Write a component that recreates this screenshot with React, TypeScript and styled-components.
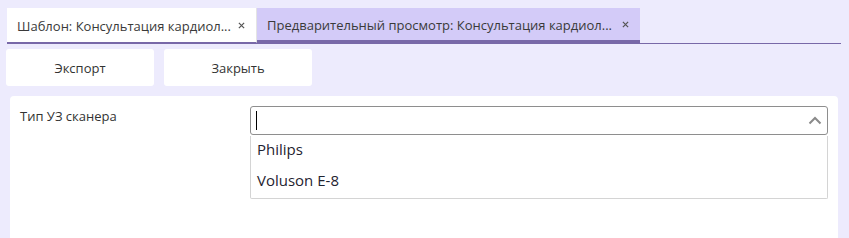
import { useState } from "react";
import styled, { createGlobalStyle } from "styled-components";

const tabs = [
  { id: "template", title: "Шаблон: Консультация кардиол...", width: 250 },
  { id: "preview", title: "Предварительный просмотр: Консультация кардиол...", width: 383 },
];

const scanners = ["Philips", "Voluson E-8"];

const App = () => {
  const [active, setActive] = useState("preview");
  const [query, setQuery] = useState("");

  return (
    <>
      <GlobalStyle />
      <TabBar>
        {tabs.map((tab) => (
          <Tab
            key={tab.id}
            $active={tab.id === active}
            $width={tab.width}
            onClick={() => setActive(tab.id)}
          >
            <TabTitle>{tab.title}</TabTitle>
            <CloseIcon viewBox="0 0 8 8">
              <path d="M1 1 L7 7 M7 1 L1 7" />
            </CloseIcon>
          </Tab>
        ))}
      </TabBar>
      <Toolbar>
        <ToolButton>Экспорт</ToolButton>
        <ToolButton>Закрыть</ToolButton>
      </Toolbar>
      <Panel>
        <FieldLabel>Тип УЗ сканера</FieldLabel>
        <Combo>
          <ComboInput>
            <Input value={query} onChange={(e) => setQuery(e.target.value)} />
            <Caret />
            <Chevron viewBox="0 0 14 9">
              <path d="M1.5 7.5 L7 2 L12.5 7.5" />
            </Chevron>
          </ComboInput>
          <List>
            {scanners.map((s) => (
              <Option key={s}>{s}</Option>
            ))}
          </List>
        </Combo>
      </Panel>
    </>
  );
};
export default App;

const GlobalStyle = createGlobalStyle`
  html, body {
    margin: 0;
    background: #edebfd;
    font-family: "Open Sans", "Noto Sans", sans-serif;
    color: #333333;
  }
  * { box-sizing: border-box; }
`;

const TabBar = styled.div`
  display: flex;
  margin: 0 8px 0 7px;
  padding-top: 8px;
  border-bottom: 1px solid #7868a8;
  height: 44px;
`;

const Tab = styled.div<{ $active: boolean; $width: number }>`
  display: flex;
  align-items: center;
  justify-content: space-between;
  width: ${(p) => p.$width}px;
  height: 35px;
  padding: 0 11px 0 10px;
  background: ${(p) => (p.$active ? "#d3cbf8" : "#ffffff")};
  border-bottom: ${(p) => (p.$active ? "3px solid #7868a8" : "1px solid #7868a8")};
  margin-bottom: -1px;
  border-right: ${(p) => (p.$active ? "none" : "1px solid #e4e4e4")};
  cursor: pointer;
`;

const TabTitle = styled.span`
  font-size: 13px;
  color: #3a3a3a;
  white-space: nowrap;
  padding-top: 1px;
`;

const CloseIcon = styled.svg`
  width: 7px;
  height: 7px;
  stroke: #555555;
  stroke-width: 1.4;
  fill: none;
  flex-shrink: 0;
`;

const Toolbar = styled.div`
  display: flex;
  gap: 10px;
  padding: 5px 0 0 6px;
`;

const ToolButton = styled.button`
  width: 148px;
  height: 37px;
  background: #ffffff;
  border: none;
  border-radius: 3px;
  font-family: inherit;
  font-size: 13px;
  color: #333333;
  cursor: pointer;
`;

const Panel = styled.div`
  display: grid;
  grid-template-columns: 230px 1fr;
  align-items: start;
  margin: 10px 11px 0 10px;
  padding: 10px 10px 0 10px;
  height: 150px;
  background: #ffffff;
  border-radius: 4px;
`;

const FieldLabel = styled.div`
  font-size: 13px;
  color: #333333;
  padding-top: 1px;
`;

const Combo = styled.div`
  display: flex;
  flex-direction: column;
`;

const ComboInput = styled.div`
  position: relative;
  height: 29px;
  border: 1px solid #8e8e8e;
  border-radius: 3px;
`;

const Input = styled.input`
  width: 100%;
  height: 100%;
  border: none;
  outline: none;
  background: transparent;
  padding: 0 30px 0 6px;
  font-family: inherit;
  font-size: 14px;
  caret-color: transparent;
`;

const Caret = styled.span`
  position: absolute;
  left: 5px;
  top: 4px;
  width: 1px;
  height: 19px;
  background: #000000;
`;

const Chevron = styled.svg`
  position: absolute;
  right: 5px;
  top: 9px;
  width: 14px;
  height: 9px;
  fill: none;
  stroke: #8a8a8a;
  stroke-width: 2;
`;

const List = styled.div`
  margin-top: 1px;
  height: 63px;
  border: 1px solid #d4d4d4;
  border-top: none;
  border-radius: 0 0 2px 2px;
`;

const Option = styled.div`
  height: 31px;
  line-height: 26px;
  padding-left: 6px;
  font-size: 15px;
  color: #1f2330;
`;
